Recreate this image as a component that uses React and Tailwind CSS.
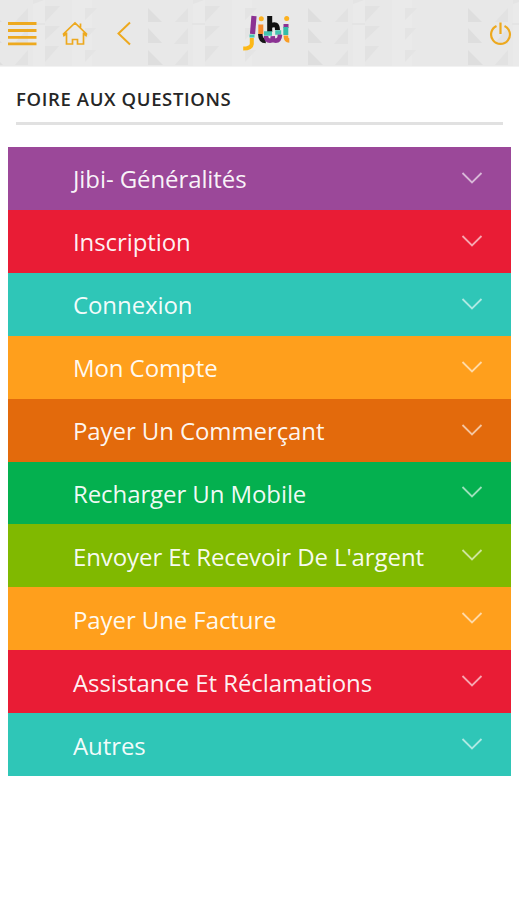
const rows = [
  ["Jibi- Généralités", "bg-[#9b4899]"],
  ["Inscription", "bg-[#e91c35]"],
  ["Connexion", "bg-[#2fc6b7]"],
  ["Mon Compte", "bg-[#ff9f1c]"],
  ["Payer Un Commerçant", "bg-[#e36a0c]"],
  ["Recharger Un Mobile", "bg-[#04b04f]"],
  ["Envoyer Et Recevoir De L'argent", "bg-[#80b900]"],
  ["Payer Une Facture", "bg-[#ff9f1c]"],
  ["Assistance Et Réclamations", "bg-[#e91c35]"],
  ["Autres", "bg-[#2fc6b7]"],
];

function HeaderPattern() {
  return (
    <svg className="absolute inset-0 h-full w-full" aria-hidden="true">
      <defs>
        <pattern id="tri" x="148" y="0" width="160" height="67" patternUnits="userSpaceOnUse">
          <rect width="160" height="67" fill="#e8e8e8" />
          <path d="M45 0h12v67H45zM84 0h20v67H84z" fill="#eaeaea" />
          <path d="M0 8v14h14zM0 28v15h14zM0 50v15h15z" fill="#dedede" />
          <path d="M40 8v14H27zM40 28v16H26zM40 50v15H27zM57 22V6h15zM57 40V26h15zM57 62V46h14z" fill="#e2e2e2" />
          <path d="M97 20V8h12zM97 40V28h11zM97 62V50h11zM45 4V0h11zM44 23h13v2H44z" fill="#e4e4e4" />
        </pattern>
      </defs>
      <rect width="100%" height="100%" fill="url(#tri)" />
    </svg>
  );
}

function Logo() {
  return (
    <svg className="absolute left-[242px] top-[14px]" width="50" height="38" viewBox="242 14 50 38" fill="none" strokeWidth="4">
      <path d="M254 16L252.500 34" stroke="#8b3293" strokeWidth="5.200" />
      <path d="M252 34.500v3" stroke="#45c4b0" strokeWidth="5" />
      <path d="M251.800 38v6q-.5 4.600-8.600 4.600" stroke="#fcb817" strokeWidth="4" />
      <circle cx="261.300" cy="18.800" r="2.500" fill="#fcb11f" />
      <path d="M260.800 24.500v9.500" stroke="#f58a2b" strokeWidth="5" />
      <path d="M260.300 34q0 7 5.500 7" stroke="#161616" strokeWidth="4.500" />
      <path d="M269.700 16v16M270 26q7.500-4 7.500 4" stroke="#111" strokeWidth="5" />
      <path d="M264 33.500h8M275.200 32.500h6" stroke="#45c4b0" strokeWidth="4.500" />
      <path d="M266 36q0 4.700 4 4.700 3 0 2.700-4.500 0 4.500 3 4.500 4 0 4.300-6" stroke="#8b3293" strokeWidth="4.500" />
      <circle cx="286.700" cy="18.500" r="2.500" fill="#fcb11f" />
      <path d="M286 24v4" stroke="#8b3293" strokeWidth="5" />
      <path d="M285.800 27v8" stroke="#35bda8" strokeWidth="5" />
      <path d="M285.800 35.500q0 5 3.500 5" stroke="#f99d25" strokeWidth="4.500" />
    </svg>
  );
}

export default function App() {
  return (
    <div className="h-[900px] w-[519px] overflow-hidden bg-white font-['Open_Sans',sans-serif]">
      <header className="relative h-[67px] border-b border-[#f2f2f2]">
        <HeaderPattern />
        <svg className="absolute inset-0" width="519" height="67" fill="none" stroke="#eda91f" strokeWidth="2.200">
          <path d="M8 23.500h28.500M8 30.500h28.500M8 37.300h28.500M8 43.800h28.500" strokeWidth="2.800" />
          <path d="M66.500 33.500L64 35.500L63.500 34L75 23L86.500 34L86 35.500L83.500 33.500M66.500 32.500v11.500h6v-4.500h5v4.500h6V32.500M80.500 27.500v-4" strokeWidth="1.700" />
          <path d="M130 22.500L118.500 33.500L130 44.500" strokeWidth="2" />
          <path d="M496.500 26a9.400 9.400 0 1 0 8 0M500.500 22.500V34" />
        </svg>
        <Logo />
      </header>
      <main>
        <div className="mx-4 flex h-[58px] items-center border-b-[3px] border-[#e1e1e1] pt-[9px]">
          <h1 className="whitespace-nowrap text-[18.500px] font-semibold leading-6 tracking-[0.630px] text-[#262626]">
            FOIRE AUX QUESTIONS
          </h1>
        </div>
        <ul className="mx-2 mt-[22px] grid h-[629px] grid-rows-10">
          {rows.map(([label, color]) => (
            <li key={label} className={`flex items-center justify-between pl-[65px] pr-[28px] text-white/95 ${color}`}>
              <span className="whitespace-nowrap pt-0.5 text-[24px] leading-8 tracking-[-0.090px]">{label}</span>
              <svg className="-mt-px" width="22" height="12" fill="none" stroke="currentColor" strokeOpacity=".65" strokeWidth="1.800"><path d="M1.500 1L11 10.500L20.500 1" /></svg>
            </li>
          ))}
        </ul>
      </main>
    </div>
  );
}
